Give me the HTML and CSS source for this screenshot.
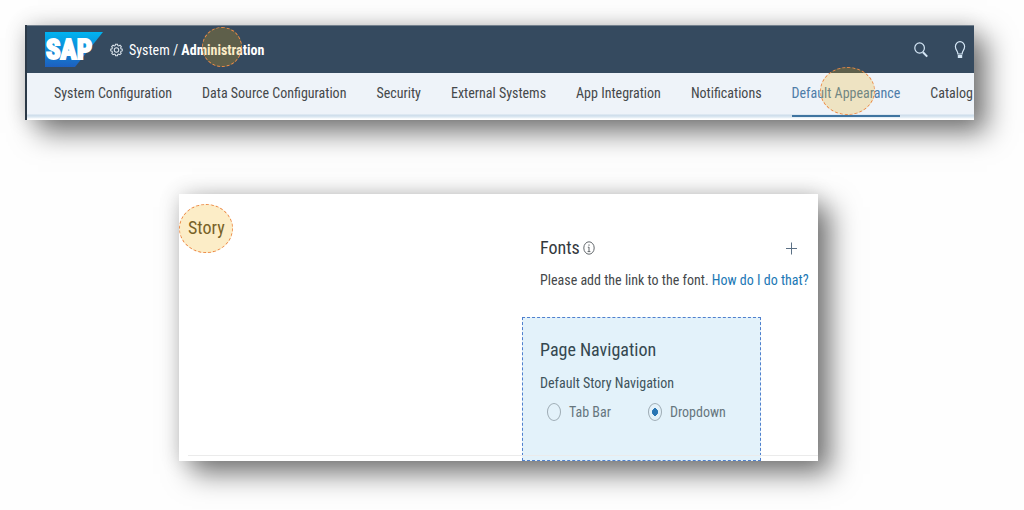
FILE: index.html
```html
<!DOCTYPE html>
<html lang="en">
<head>
<meta charset="utf-8">
<meta name="viewport" content="width=device-width, initial-scale=1">
<title>System / Administration</title>
<link rel="stylesheet" href="styles.css">
</head>
<body>
<main class="page">
  <section class="shell">
    <header class="topbar">
      <svg class="logo" viewBox="0 0 58 35" role="img" aria-label="SAP">
        <defs><linearGradient id="brand" x1="0" y1="0" x2="0" y2="1"><stop offset="0" stop-color="#00b4f0"/><stop offset="1" stop-color="#1d5fbf"/></linearGradient></defs>
        <path d="M0 0H58L30 35H0Z" fill="url(#brand)"/>
        <text class="logo-text" x="1" y="27">SAP</text>
      </svg>
      <svg class="gear" viewBox="0 0 14 14" aria-hidden="true">
        <path d="M5.9 .8H8.1L8.5 2.3L9.4 2.7L10.8 1.9L12.2 3.4L11.4 4.7L11.8 5.7L13.2 6.1V8L11.8 8.4L11.4 9.3L12.1 10.7L10.7 12.1L9.4 11.4L8.4 11.8L8 13.2H6L5.6 11.8L4.6 11.4L3.3 12.1L1.9 10.7L2.6 9.3L2.2 8.4L.8 8V6.1L2.2 5.7L2.6 4.7L1.8 3.4L3.3 1.9L4.6 2.7L5.5 2.3Z"/>
        <circle cx="7" cy="7" r="2.4"/>
      </svg>
      <h1 class="crumbs">System / <strong class="marked">Administration<span class="spot spot-crumb"></span></strong></h1>
      <div class="tools">
        <button class="icon-button" type="button" aria-label="Search">
          <svg class="icon-search" viewBox="0 0 14 16"><ellipse cx="5.6" cy="6" rx="4.8" ry="5.2"/><path class="handle" d="M9 10.2L13.2 14.6"/></svg>
        </button>
        <button class="icon-button" type="button" aria-label="Hints">
          <svg class="icon-bulb" viewBox="0 0 12 18"><path d="M3.9 13C3.9 10 1.4 9 1.4 5.6A4.6 5 0 0 1 10.6 5.6C10.6 9 8.1 10 8.1 13Z"/><path class="base" d="M3.8 15.5H8.2"/></svg>
        </button>
      </div>
    </header>
    <nav class="tabs" aria-label="Administration">
      <a class="tab" href="#system">System Configuration</a>
      <a class="tab" href="#data">Data Source Configuration</a>
      <a class="tab" href="#security">Security</a>
      <a class="tab" href="#external">External Systems</a>
      <a class="tab" href="#apps">App Integration</a>
      <a class="tab" href="#notifications">Notifications</a>
      <a class="tab tab-active" href="#appearance" aria-current="page">Default Appearance<span class="spot spot-tab"></span></a>
      <a class="tab" href="#catalog">Catalog</a>
    </nav>
  </section>

  <section class="card">
    <div class="card-body">
      <h2 class="title story">Story<span class="spot spot-story"></span></h2>
      <div class="settings">
        <section class="fonts">
          <div class="fonts-head">
            <h3 class="title">Fonts</h3>
            <svg class="info" viewBox="0 0 12 14" role="img" aria-label="Information"><ellipse cx="6" cy="7" rx="5.2" ry="6.2"/><path d="M6 3.4V4.8M6 6V10.6M4.8 6.2H6M4.6 10.6H7.4"/></svg>
            <button class="add" type="button" aria-label="Add font"><svg class="icon-plus" viewBox="0 0 11 13"><path d="M5.5 .5V12.5M0 6.5H11"/></svg></button>
          </div>
          <p class="hint">Please add the link to the font. <a class="link" href="#help">How do I do that?</a></p>
        </section>
        <section class="page-nav">
          <h3 class="title">Page Navigation</h3>
          <fieldset class="choices">
            <legend class="legend">Default Story Navigation</legend>
            <div class="options">
              <label class="option"><input class="radio" type="radio" name="navigation">Tab Bar</label>
              <label class="option"><input class="radio" type="radio" name="navigation" checked>Dropdown</label>
            </div>
          </fieldset>
        </section>
      </div>
    </div>
  </section>
</main>
</body>
</html>
```
FILE: styles.css
```css
* { box-sizing: border-box; }
body {
  margin: 0;
  background: #fefefe;
  color: #45484a;
  font: 14px/20px "Roboto Condensed", "Liberation Sans Narrow", Roboto, sans-serif;
}
h1, h2, h3, p { margin: 0; font-weight: 400; }
button { padding: 0; border: 0; background: none; }
svg { display: block; fill: none; flex: none; }

.page { padding: 25px 50px 48px 25px; }
.shell, .card { box-shadow: 13px 13px 26px rgba(0, 0, 0, .5), 0 0 20px rgba(0, 0, 0, .16); }

.shell { border-left: 2px solid #2b3947; background: #eef3f9; }
.topbar {
  display: flex;
  align-items: center;
  height: 48px;
  padding: 0 8px 0 18px;
  border-top: 1px solid #73808d;
  background: #354a5f;
  color: #fff;
}
.logo { width: 58px; height: 35px; }
.logo-text { font: 700 27px "Roboto Condensed", "Liberation Sans", sans-serif; fill: #fff; stroke: #fff; stroke-width: 2px; stroke-linejoin: miter; }
.gear { width: 13px; height: 14px; margin: 0 6px 0 7px; stroke: #dce5ed; stroke-width: 1.1; }
.crumbs { font-size: 14px; white-space: nowrap; }
.tools { display: flex; gap: 26px; margin-left: auto; }
.icon-button { display: flex; align-items: center; color: #d5e7f6; }
.icon-button svg { stroke: currentColor; stroke-width: 1.2; }
.icon-search { width: 14px; height: 16px; }
.icon-bulb { width: 12px; height: 18px; }
.icon-button .handle { stroke-width: 2; }
.icon-button .base { stroke-width: 3; }

.tabs {
  display: flex;
  gap: 30px;
  height: 47px;
  padding: 0 0 3px 27px;
  background: linear-gradient(#eef3f9 41px, #ccdcea 42px, #dce8f2 44px, #fff 46px);
}
.tab { position: relative; padding: 10px 0 11px; color: #45484a; text-decoration: none; white-space: nowrap; }
.tab-active { border-bottom: 2px solid #3f74a0; color: #4f7ca8; }

.marked, .story { position: relative; }
.spot {
  position: absolute;
  border: 1px dashed #ed8b46;
  border-radius: 50%;
  background: rgba(240, 171, 0, .22);
  pointer-events: none;
}
.spot-crumb { left: 21px; top: -15px; width: 40px; height: 40px; }
.spot-tab { left: 28px; top: -6px; width: 55px; height: 48px; }
.spot-story { left: -9px; top: -12px; width: 54px; height: 49px; }

.card { margin: 74px 156px 0 154px; background: #fff; }
.card-body { display: grid; grid-template-columns: 1fr 296px; }
.card-body::after { content: ""; grid-area: 1 / 1 / 2 / 3; align-self: end; height: 1px; margin: 0 0 5px 9px; background: #ebebeb; }
.title { color: #34393d; font-size: 18px; line-height: 24px; }
.story { grid-area: 1 / 1; justify-self: start; align-self: start; margin: 22px 0 0 9px; color: #554c33; }
.settings { grid-area: 1 / 2; padding-top: 42px; }
.fonts { padding: 0 10px 27px 18px; }
.fonts-head { display: flex; align-items: center; gap: 3px; }
.info { width: 12px; height: 14px; stroke: #62676b; }
.add { margin: 0 11px 0 auto; }
.icon-plus { width: 11px; height: 13px; stroke: #5b7085; }
.hint { margin-top: 10px; white-space: nowrap; }
.link { color: #1b78b5; text-decoration: none; }
.page-nav { width: 239px; height: 144px; padding: 20px 17px; border: 1px dashed #4f80ce; background: #e3f2fa; }
.page-nav .title { color: #34474f; }
.choices { margin: 11px 0 0; padding: 0; border: 0; color: #66767e; }
.legend { padding: 0; color: #40545c; }
.options { display: flex; gap: 37px; padding: 9px 0 0 7px; }
.option { display: flex; align-items: center; gap: 8px; white-space: nowrap; }
.radio {
  appearance: none;
  flex: none;
  width: 14px;
  height: 18px;
  margin: 0;
  border: 1px solid #9eacb4;
  border-radius: 50%;
}
.radio:checked { background: radial-gradient(ellipse 3px 4px, #2876b4 90%, transparent 100%); }
```
